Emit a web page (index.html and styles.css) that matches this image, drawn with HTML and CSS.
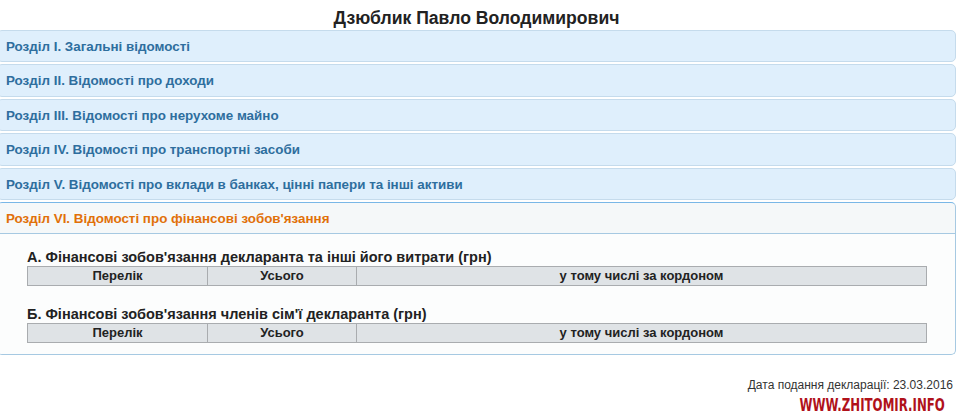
FILE: index.html
```html
<!DOCTYPE html>
<html lang="uk">
<head>
<meta charset="utf-8">
<title>Дзюблик Павло Володимирович</title>
<link rel="stylesheet" href="styles.css">
</head>
<body>
<div class="page">
  <h1 class="title">Дзюблик Павло Володимирович</h1>
  <div class="accordion">
    <div class="acc-header">Розділ I. Загальні відомості</div>
    <div class="acc-header">Розділ II. Відомості про доходи</div>
    <div class="acc-header">Розділ III. Відомості про нерухоме майно</div>
    <div class="acc-header">Розділ IV. Відомості про транспортні засоби</div>
    <div class="acc-header">Розділ V. Відомості про вклади в банках, цінні папери та інші активи</div>
    <div class="acc-header active">Розділ VI. Відомості про фінансові зобов'язання</div>
    <div class="acc-content">
      <h3 class="sub">А. Фінансові зобов'язання декларанта та інші його витрати (грн)</h3>
      <table class="grid">
        <tr><th class="c1">Перелік</th><th class="c2">Усього</th><th class="c3">у тому числі за кордоном</th></tr>
      </table>
      <h3 class="sub second">Б. Фінансові зобов'язання членів сім'ї декларанта (грн)</h3>
      <table class="grid">
        <tr><th class="c1">Перелік</th><th class="c2">Усього</th><th class="c3">у тому числі за кордоном</th></tr>
      </table>
    </div>
  </div>
  <div class="date">Дата подання декларації: 23.03.2016</div>
  <div class="mark-row"><span class="mark">WWW.ZHITOMIR.INFO</span></div>
</div>
</body>
</html>
```

FILE: styles.css
```css
html, body {
  margin: 0;
  padding: 0;
  background: #ffffff;
}
body {
  font-family: "Liberation Sans", Arial, sans-serif;
  color: #222222;
  overflow: hidden;
}
.page {
  width: 959px;
  margin-left: -3px;
}
.title {
  margin: 0;
  padding-top: 8px;
  height: 20px;
  line-height: 20px;
  font-size: 17.6px;
  font-weight: bold;
  text-align: center;
  color: #222222;
}
.accordion {
  display: flex;
  flex-direction: column;
}
.acc-header {
  margin-top: 2px;
  border: 1px solid #c5dbec;
  background: #dfeffc;
  border-radius: 5px;
  color: #2e6e9e;
  font-size: 13.4px;
  font-weight: bold;
  line-height: 15.4px;
  padding: 8px 8px 7px 8px;
}
.acc-header.active {
  background: #f5f8f9;
  border-color: #a6c9e2;
  border-top-color: #79b7e7;
  color: #e17009;
  border-radius: 5px 5px 0 0;
}
.acc-content {
  border: 1px solid #a6c9e2;
  border-top: 0;
  background: #fcfdfd;
  border-radius: 0 0 5px 5px;
  padding: 14px 30px 11px 29px;
}
.sub {
  margin: 0;
  font-size: 14.5px;
  line-height: 18px;
  font-weight: bold;
  color: #222222;
}
.sub.second {
  margin-top: 19px;
}
.grid {
  width: 900px;
  border-collapse: collapse;
  background: #dfe3e6;
}
.grid th {
  border: 1px solid #a9acaf;
  font-size: 13px;
  font-weight: bold;
  line-height: 16px;
  padding: 1px 4px;
  color: #222222;
  text-align: center;
}
.grid .c1 { width: 171px; }
.grid .c2 { width: 140px; }
.date {
  margin-top: 23px;
  text-align: right;
  font-size: 12px;
  line-height: 14px;
  color: #333333;
  padding-right: 3px;
}
.mark-row {
  text-align: right;
  padding-right: 11px;
  margin-top: 3px;
  line-height: 20px;
}
.mark {
  display: inline-block;
  font-family: "DejaVu Sans Condensed", "Liberation Sans Narrow", sans-serif;
  font-weight: bold;
  font-size: 17px;
  color: #b0111a;
  transform: scaleX(0.77);
  transform-origin: right center;
}
```
